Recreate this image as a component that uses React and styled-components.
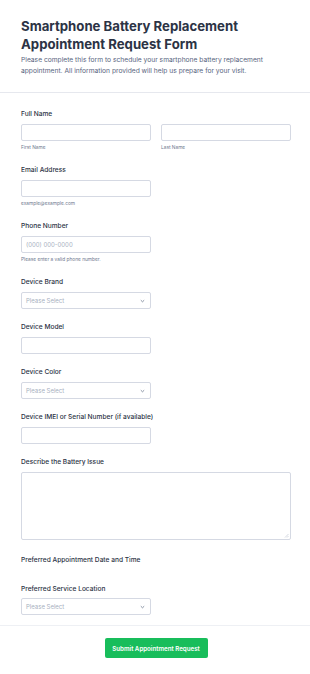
import React from "react";
import styled, { createGlobalStyle } from "styled-components";

const Global = createGlobalStyle`
  html, body { margin: 0; padding: 0; background: #fff; }
  body { font-family: Inter, "Noto Sans", sans-serif; color: #2c3345; }
  * { box-sizing: border-box; }
`;

const Page = styled.div`
  width: 310px;
  min-height: 674px;
  background: #fff;
`;

const Header = styled.header`
  padding: 17px 19px 15px 21px;
  border-bottom: 1px solid #e6e8ee;
`;

const Title = styled.h1`
  margin: 0;
  font-size: 13.2px;
  line-height: 18px;
  font-weight: 700;
  color: #2c3345;
`;

const Description = styled.p`
  margin: 2px 0 0;
  font-size: 6.7px;
  line-height: 11px;
  color: #57647e;
`;

const Body = styled.div`
  padding: 16px 19px 5px 21px;
  border-bottom: 1px solid #eef0f4;
`;

const Field = styled.div`
  display: flex;
  flex-direction: column;
  padding-bottom: ${(p) => p.$pb ?? 13}px;
`;

const Label = styled.label`
  font-size: 6.6px;
  line-height: 10px;
  font-weight: 500;
  color: #2c3345;
`;

const Row = styled.div`
  display: grid;
  grid-template-columns: 1fr 1fr;
  gap: 10px;
  margin-top: 5px;
`;

const Col = styled.div`
  display: flex;
  flex-direction: column;
`;

const Input = styled.div`
  margin-top: ${(p) => p.$mt ?? 5}px;
  width: ${(p) => (p.$full ? "100%" : "130px")};
  height: ${(p) => p.$h ?? 17}px;
  border: 1px solid #d5d9e3;
  border-radius: 2px;
  background: #fff;
  display: flex;
  align-items: center;
  justify-content: space-between;
  padding: 0 5px 0 4px;
  font-size: 6px;
  color: #a7b0c0;
  position: relative;
`;

const Sub = styled.span`
  margin-top: 3px;
  font-size: 4.8px;
  line-height: 7px;
  color: #6f7a8f;
`;

const Grip = styled.svg`
  position: absolute;
  right: 1px;
  bottom: 1px;
`;

const Footer = styled.div`
  display: flex;
  justify-content: center;
  padding: 12px 0 17px;
`;

const Button = styled.button`
  width: 103px;
  height: 20px;
  margin-left: 2px;
  border: none;
  border-radius: 2px;
  background: #18bd5b;
  color: #fff;
  font-family: Inter, sans-serif;
  font-size: 6.2px;
  font-weight: 600;
  padding: 0;
`;

const Chevron = () => (
  <svg width="5" height="4" viewBox="0 0 5 4">
    <path d="M0.8 1.2 L2.5 2.8 L4.2 1.2" fill="none" stroke="#7b8699" strokeWidth="0.9" />
  </svg>
);

const Select = ({ mt }) => (
  <Input $mt={mt}>
    <span>Please Select</span>
    <Chevron />
  </Input>
);

export default function App() {
  return (
    <Page>
      <Global />
      <Header>
        <Title>Smartphone Battery Replacement Appointment Request Form</Title>
        <Description>
          Please complete this form to schedule your smartphone battery replacement
          appointment. All information provided will help us prepare for your visit.
        </Description>
      </Header>
      <Body>
        <Field $pb={14}>
          <Label>Full Name</Label>
          <Row>
            <Col>
              <Input $full $mt={0} />
              <Sub>First Name</Sub>
            </Col>
            <Col>
              <Input $full $mt={0} />
              <Sub>Last Name</Sub>
            </Col>
          </Row>
        </Field>
        <Field $pb={14}>
          <Label>Email Address</Label>
          <Input />
          <Sub>example@example.com</Sub>
        </Field>
        <Field $pb={14}>
          <Label>Phone Number</Label>
          <Input>
            <span>(000) 000-0000</span>
          </Input>
          <Sub>Please enter a valid phone number.</Sub>
        </Field>
        <Field>
          <Label>Device Brand</Label>
          <Select />
        </Field>
        <Field>
          <Label>Device Model</Label>
          <Input />
        </Field>
        <Field>
          <Label>Device Color</Label>
          <Select />
        </Field>
        <Field>
          <Label>Device IMEI or Serial Number (if available)</Label>
          <Input />
        </Field>
        <Field $pb={15}>
          <Label>Describe the Battery Issue</Label>
          <Input $full $h={68}>
            <Grip width="5" height="5" viewBox="0 0 5 5">
              <path d="M4.5 1 L1 4.5 M4.5 3 L3 4.5" stroke="#b8bfcc" strokeWidth="0.6" />
            </Grip>
          </Input>
        </Field>
        <Field $pb={19}>
          <Label>Preferred Appointment Date and Time</Label>
        </Field>
        <Field $pb={5}>
          <Label>Preferred Service Location</Label>
          <Select mt={4} />
        </Field>
      </Body>
      <Footer>
        <Button>Submit Appointment Request</Button>
      </Footer>
    </Page>
  );
}
